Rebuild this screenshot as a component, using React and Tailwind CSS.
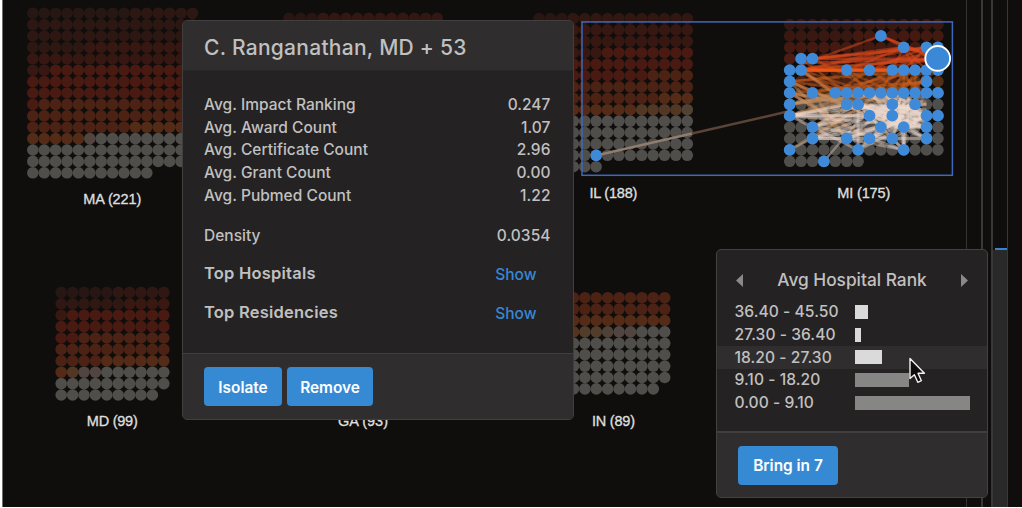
import React from "react";

const PITCH = 11.4;
const GRAY = "#504e4b";

// Each group: origin of the first dot, column count, total, and colour runs [firstIndex, colour].
const groups = [
  { id: "MA", x: 32.8, y: 13.2, cols: 15, n: 221, label: "MA (221)", lx: 112.3, ly: 203.7, lw: 58,
    runs: [[0, "#261614"], [9, "#2d1713"], [50, "#371711"], [77, "#481a12"], [121, "#4c2215"], [159, "#542b16"], [170, "#524540"], [171, GRAY]] },
  { id: "NJ", x: 289, y: 18.4, cols: 14, n: 190,
    runs: [[0, "#291613"], [3, "#331712"], [42, "#481a12"], [80, "#4c2215"], [120, GRAY]] },
  { id: "IL", x: 539.1, y: 18.5, cols: 14, n: 188, label: "IL (188)", lx: 613.4, ly: 198, lw: 48,
    runs: [[0, "#291613"], [3, "#301712"], [14, "#371711"], [48, "#481a12"], [80, "#4c2215"], [109, "#542b16"], [121, "#523725"], [125, "#504333"], [126, GRAY]] },
  { id: "MI", x: 789.7, y: 24.5, cols: 14, n: 175, label: "MI (175)", lx: 863.8, ly: 198, lw: 53,
    runs: [[0, "#331712"], [6, "#3a1812"], [20, "#431912"], [42, "#4a1c13"], [60, "#4c2215"], [80, "#523016"], [90, GRAY]] },
  { id: "MD", x: 61.2, y: 292.4, cols: 10, n: 99, label: "MD (99)", lx: 112.3, ly: 426, lw: 51,
    runs: [[0, "#261614"], [5, "#2f1713"], [16, "#3a1812"], [21, "#481a12"], [42, "#4c2215"], [64, "#542b16"], [71, "#523725"], [72, "#504540"], [74, GRAY]] },
  { id: "GA", x: 311, y: 292.4, cols: 10, n: 93, label: "GA (93)", lx: 363, ly: 426, lw: 50,
    runs: [[0, "#481a12"], [40, GRAY]] },
  { id: "IN", x: 562.1, y: 297.7, cols: 10, n: 89, label: "IN (89)", lx: 613.5, ly: 426, lw: 43,
    runs: [[0, "#4c2215"], [20, "#542b16"], [31, "#54331f"], [32, "#523c2a"], [34, "#504137"], [35, "#504540"], [37, GRAY]] },
];

const colorAt = (runs, i) => {
  let c = runs[0][1];
  for (const [start, color] of runs) if (i >= start) c = color;
  return c;
};

// Selected columns per row of the MI group.
const selected = [
  [], [8], [10, 12, 13], [1, 2], [0, 1, 5, 7, 9, 10, 11, 12, 13], [0, 12],
  [0, 2, 4, 5, 6, 7, 8, 9, 10, 11, 12, 13], [0, 5, 6, 9, 11], [0, 7, 9, 12, 13],
  [2, 8, 10, 12], [2, 5, 7, 9, 12], [0, 6, 10], [3],
];
const mx = (c) => 789.7 + c * PITCH;
const my = (r) => 24.5 + r * PITCH;

// Edges as [col1, row1, col2, row2].
const redEdges = [
  [8, 1, 1, 3.5], [8, 1, 10, 2], [8, 1, 13, 3], [8, 1, 12, 2.6], [10, 2, 1, 4], [10, 2, 2, 3],
  [12, 2, 2, 3], [12, 2, 1, 4], [13, 2, 2, 3], [13, 3, 1, 3.4], [13, 3, 1, 4], [13, 2.4, 5, 4],
  [10, 2, 9, 4], [10, 2, 11, 4], [10, 2, 12, 4], [12, 2, 10, 4], [13, 3, 7, 4], [13, 3, 2, 3],
  [10, 2, 13, 3], [12, 2, 7, 4], [10, 2, 5, 4],
];
const orangeEdges = [
  [1, 4, 13, 4], [1, 4, 12, 4], [0, 4, 13, 3], [0, 5, 2, 6], [0, 5, 12, 4], [0, 5, 7, 6], [0, 5, 5, 7],
  [1, 4, 4, 6], [1, 4, 6, 7], [1, 4, 7, 6], [1, 3, 5, 6], [2, 3, 8, 6], [5, 4, 7, 6], [5, 4, 9, 6],
  [7, 4, 4, 6], [7, 4, 10, 6], [9, 4, 5, 6], [9, 4, 8, 6], [9, 4, 12, 6], [10, 4, 7, 6], [10, 4, 4, 6],
  [10, 4, 9, 6], [10, 4, 11, 6], [11, 4, 8, 6], [11, 4, 10, 6], [11, 4, 5, 6], [12, 4, 9, 6], [12, 4, 2, 6],
  [12, 4, 11, 6], [12, 5, 7, 6], [12, 5, 4, 6], [13, 4, 10, 6], [10, 4, 10, 6], [11, 4, 11, 6],
  [0, 5, 9, 4], [0, 4, 6, 6], [12, 5, 0, 6],
];
const tanEdges = [
  [0, 5, 5, 10], [0, 5, 7, 8], [0, 6, 6, 7], [0, 6, 5, 7], [0, 7, 9, 6], [0, 7, 7, 6], [0, 7, 5, 6],
  [2, 6, 6, 7], [1, 4, 8, 9], [0, 6, 7, 10], [0, 8, 6, 6], [0, 8, 8, 6], [0, 6, 5, 9], [2, 9, 7, 6],
  [2, 10, 8, 6], [2, 9, 10, 6], [0, 8, 10, 6], [0, 11, 5, 8], [2, 6, 5, 10], [0, 7, 4, 6],
  [4, 6, 9, 7], [5, 6, 10, 7], [6, 6, 12, 7], [4, 6, 12, 6.8],
];
const whiteEdges = [
  [0, 8, 5, 7], [0, 8, 7, 8], [0, 8, 9, 7], [0, 8, 2, 9], [0, 8, 6, 7], [0, 8, 9, 8], [0, 8, 12, 9],
  [2, 9, 6, 7], [2, 9, 7, 8], [2, 9, 9, 7], [2, 9, 6, 11], [2, 9, 9, 10], [2, 10, 5, 10], [2, 10, 12, 10],
  [2, 10, 8, 9], [2, 10, 9, 8], [2, 10, 7, 8], [5, 10, 10, 8], [5, 10, 9, 7], [5, 10, 12, 8], [6, 11, 6, 7],
  [6, 11, 8, 9], [6, 11, 10, 8], [6, 11, 12, 8], [5, 10, 10, 11], [7, 10, 10, 11], [9, 10, 10, 11],
  [6, 7, 10, 11], [6, 7, 12, 8], [6, 7, 12, 9], [6, 7, 11, 9], [6, 7, 10, 9], [6, 7, 12, 10], [5, 7, 12, 8],
  [7, 8, 12, 8], [7, 8, 12, 9], [7, 8, 12, 10], [7, 8, 10, 6], [7, 8, 11, 7], [8, 9, 12, 8], [8, 9, 9, 7],
  [8, 9, 11, 7], [8, 9, 12, 9], [8, 9, 9, 6], [9, 7, 12, 9], [9, 7, 12, 8], [9, 7, 10, 9], [9, 8, 12, 9],
  [9, 8, 12, 10], [9, 8, 11, 7], [9, 8, 10, 6], [9, 8, 10, 9], [10, 9, 12, 8], [10, 9, 12, 9], [10, 9, 11, 7],
  [10, 9, 10, 11], [10, 6, 10, 9], [10, 6, 12, 9], [10, 6, 12, 8], [10, 6, 9, 8], [9, 6, 12, 8], [9, 6, 9, 8],
  [8, 6, 12, 8], [8, 6, 11, 8], [7, 6, 12, 8], [7, 6, 10, 9], [6, 6, 12, 8], [11, 6, 11, 9], [11, 6, 9, 8],
  [12, 6, 9, 8], [12, 6, 10, 9], [7, 10, 12, 8], [7, 10, 11, 7], [7, 10, 10, 8], [9, 10, 12, 8], [9, 10, 10, 7],
  [10, 11, 9.6, 7], [10, 11, 10.4, 7], [6, 7, 9, 8], [6, 7, 8, 9], [5, 10, 8, 9], [7, 8, 9, 7], [7, 8, 10, 9],
  [12, 7, 8, 7.5], [12, 8.5, 7, 7.5], [6, 7, 12, 7.5], [9, 8, 7, 7],
];

function Edges({ list, color, opacity, width }) {
  return (
    <g stroke={color} strokeOpacity={opacity} strokeWidth={width}>
      {list.map(([a, b, c, d], i) => (
        <line key={i} x1={mx(a)} y1={my(b)} x2={mx(c)} y2={my(d)} />
      ))}
    </g>
  );
}

function Canvas() {
  return (
    <svg className="block h-[507px] w-[963px]" viewBox="3 0 963 507">
      {groups.map((g) => (
        <g key={g.id}>
          {Array.from({ length: g.n }, (_, i) => (
            <circle
              key={i}
              cx={g.x + (i % g.cols) * PITCH}
              cy={g.y + Math.floor(i / g.cols) * PITCH}
              r="5.8"
              fill={colorAt(g.runs, i)}
            />
          ))}
          {g.label && (
            <text
              x={g.lx}
              y={g.ly}
              textAnchor="middle"
              textLength={g.lw}
              fill="#dededc"
              stroke="#dededc"
              strokeWidth="0.35"
              className="font-['Liberation_Sans',sans-serif] text-[14.5px]"
            >
              {g.label}
            </text>
          )}
        </g>
      ))}
      <line x1="596" y1="155.5" x2="692" y2="133.5" stroke="#8f7d70" strokeWidth="2.6" />
      <line x1="692" y1="133.5" x2="790" y2="111" stroke="#5b4437" strokeWidth="2.4" />
      <Edges list={orangeEdges} color="#c9601c" opacity="0.45" width="2.6" />
      <Edges list={tanEdges} color="#c9905f" opacity="0.5" width="2.8" />
      <line x1={mx(3)} y1={my(12)} x2={mx(6)} y2={my(8.5)} stroke="#a39a90" strokeOpacity="0.7" strokeWidth="2.4" />
      <line x1={mx(0)} y1={my(11)} x2={mx(2)} y2={my(10)} stroke="#a39a90" strokeOpacity="0.6" strokeWidth="2.4" />
      <Edges list={whiteEdges} color="#f0dccf" opacity="0.42" width="3" />
      <Edges list={redEdges} color="#dd4a1c" opacity="0.5" width="2.6" />
      <line x1={mx(1)} y1={my(4)} x2={mx(13)} y2={my(4)} stroke="#f0560f" strokeWidth="3.4" />
      <g fill="#3f8ad8">
        {selected.map((cols, r) =>
          cols.map((c) => <circle key={`${r}-${c}`} cx={mx(c)} cy={my(r)} r="5.9" />)
        )}
        <circle cx="596.2" cy="155.4" r="5.8" />
      </g>
      <rect x="582" y="21.9" width="370.4" height="153.4" fill="none" stroke="#3f68bd" strokeWidth="1.5" />
      <circle cx="937.7" cy="58.4" r="12.4" fill="#3a88d6" stroke="#fff" strokeWidth="1.9" />
    </svg>
  );
}

function Stat({ label, value }) {
  return (
    <div className="flex h-[22.8px] items-center justify-between">
      <span className="tracking-[0.02px]">{label}</span>
      <span className="tracking-[0.05px]">{value}</span>
    </div>
  );
}

function Section({ label }) {
  return (
    <div className="flex h-[39px] items-center justify-between pr-[14px]">
      <span className="text-[16.5px] font-semibold tracking-[0.22px]">{label}</span>
      <span className="pt-[3px] text-[#3787d4]">Show</span>
    </div>
  );
}

function Button({ children, className }) {
  return (
    <button className={`h-[39px] rounded-[4px] bg-[#368ad4] pt-[2px] text-center text-[15.4px] font-semibold whitespace-nowrap text-white ${className}`}>
      {children}
    </button>
  );
}

function DetailCard() {
  return (
    <section className="absolute top-[20px] left-[179px] flex h-[400px] w-[391.5px] flex-col overflow-hidden rounded-[5px] border border-[#403e3f] bg-[#242223] text-[15.5px] font-[450] text-[#c1c0c0]">
      <header className="flex h-[50px] items-center border-b border-[#292728] bg-[#2f2d2e] px-[21px] pt-[4px] text-[21px] font-medium tracking-[0.27px]">
        C. Ranganathan, MD + 53
      </header>
      <div className="flex-1 pt-[22px] pr-[22px] pl-[21px]">
        <Stat label="Avg. Impact Ranking" value="0.247" />
        <Stat label="Avg. Award Count" value="1.07" />
        <Stat label="Avg. Certificate Count" value="2.96" />
        <Stat label="Avg. Grant Count" value="0.00" />
        <Stat label="Avg. Pubmed Count" value="1.22" />
        <div className="pt-[17px] pb-[7px]">
          <Stat label="Density" value="0.0354" />
        </div>
        <Section label="Top Hospitals" />
        <Section label="Top Residencies" />
      </div>
      <footer className="flex h-[66px] gap-[5px] border-t border-[#403e3f] bg-[#2f2d2e] px-[21px] pt-[13px]">
        <Button className="w-[78px]">Isolate</Button>
        <Button className="w-[86px]">Remove</Button>
      </footer>
    </section>
  );
}

const ranks = [
  { range: "36.40 - 45.50", bar: 13, tone: "bg-[#dadada]" },
  { range: "27.30 - 36.40", bar: 6, tone: "bg-[#dadada]" },
  { range: "18.20 - 27.30", bar: 27, tone: "bg-[#dadada]", active: true },
  { range: "9.10 - 18.20", bar: 54, tone: "bg-[#868685]" },
  { range: "0.00 - 9.10", bar: 115, tone: "bg-[#868685]" },
];

function RankCard() {
  return (
    <section className="absolute top-[249px] left-[713px] flex h-[249px] w-[272px] flex-col overflow-hidden rounded-[5px] border border-[#434142] bg-[#242223] text-[15.6px] font-[450] text-[#c1c0c0]">
      <header className="flex items-center justify-between pt-[18px] pr-[19px] pb-[8.4px] pl-[19px] text-[17.3px] leading-[24px] font-medium">
        <svg width="7" height="13" viewBox="0 0 7 13"><path d="M7 0v13L0 6.5z" fill="#8b8a8a" /></svg>
        Avg Hospital Rank
        <svg width="7" height="13" viewBox="0 0 7 13"><path d="M0 0v13l7-6.5z" fill="#8b8a8a" /></svg>
      </header>
      <div className="flex-1">
        {ranks.map((r) => (
          <div key={r.range} className={`flex h-[22.8px] items-center pl-[17.5px] ${r.active ? "bg-[#2f2d2e]" : ""}`}>
            <span className="w-[120.5px] tracking-[0.05px]">{r.range}</span>
            <span className={`h-[14px] ${r.tone}`} style={{ width: r.bar }} />
          </div>
        ))}
      </div>
      <footer className="h-[66.5px] border-t-2 border-[#403e3f] bg-[#2f2d2e] pt-[13px] pl-[21px]">
        <Button className="w-[100px]">Bring in 7</Button>
      </footer>
    </section>
  );
}

export default function App() {
  return (
    <div className="h-[508px] w-[1022px] overflow-hidden bg-white pl-[2px] font-['Inter',sans-serif]">
      <div className="relative flex h-[507px] border-l border-[#6f6f6e] bg-[#0f0e0c]">
        <Canvas />
        <aside className="flex">
          <div className="w-[15px] border-l border-[#343332]" />
          <div className="w-[10px] border-l-2 border-[#393837]" />
          <div className="flex w-[17px] flex-col border-r border-l-2 border-[#393837] pt-[248px]">
            <div className="ml-[2px] h-[2px] bg-[#3785cf]" />
            <div className="flex-1 bg-[#2a2929]" />
          </div>
        </aside>
        <DetailCard />
        <RankCard />
        <svg className="absolute top-[356px] left-[905px] h-[31px] w-[20px]" viewBox="0 0 20 31">
          <path d="M2 2.5v20l4.4-3.8 3.4 7.6 3.6-1.6-3.4-7.4h6.4z" fill="#0c0c0c" stroke="#f2f2f2" strokeWidth="1.4" strokeLinejoin="round" />
        </svg>
      </div>
    </div>
  );
}
